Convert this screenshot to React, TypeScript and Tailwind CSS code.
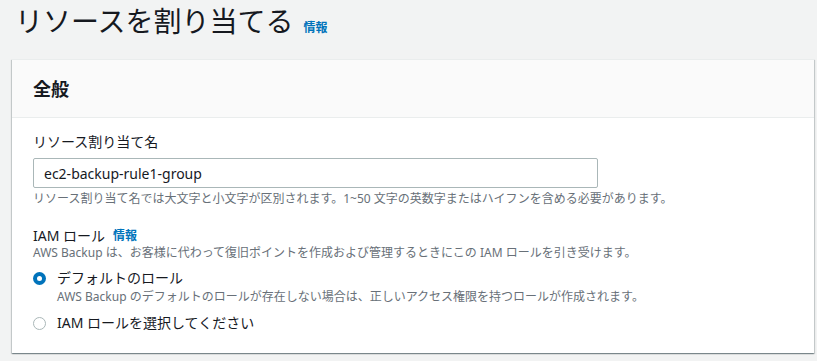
import React from 'react';

const font = { fontFamily: '"Noto Sans", "Noto Sans CJK JP", sans-serif' };

function Radio({ checked }: { checked?: boolean }) {
  return checked ? (
    <span className="flex h-[13px] w-[13px] shrink-0 items-center justify-center rounded-full bg-[#0073bb]">
      <span className="h-[5px] w-[5px] rounded-full bg-white" />
    </span>
  ) : (
    <span className="h-[13px] w-[13px] shrink-0 rounded-full border border-[#aab7b8] bg-white" />
  );
}

export default function App() {
  return (
    <div className="min-h-[361px] w-[817px] bg-[#f2f3f3] text-[#16191f]" style={font}>
      <div className="flex items-baseline gap-[10px] pl-[15px] pt-[4px]">
        <h1 className="text-[28px] font-normal leading-[34px]">リソースを割り当てる</h1>
        <a className="text-[12px] font-bold leading-[16px] text-[#0073bb]">情報</a>
      </div>

      <div className="ml-[12px] mr-[3px] mt-[21px] border-t border-[#eaeded] bg-white shadow-[0_1px_1px_0_rgba(0,28,36,0.3),1px_1px_1px_0_rgba(0,28,36,0.15),-1px_1px_1px_0_rgba(0,28,36,0.15)]">
        <div className="flex h-[58px] items-center border-b border-[#eaeded] bg-[#fafafa] px-[21px]">
          <h2 className="text-[18px] font-bold leading-[22px]">全般</h2>
        </div>

        <div className="px-[21px] pb-[20px] pt-[14px]">
          <label className="block text-[14px] leading-[20px]">リソース割り当て名</label>
          <div className="mt-[6px] flex h-[30px] w-[565px] items-center rounded-[2px] border border-[#aab7b8] px-[10px] text-[14px]">
            ec2-backup-rule1-group
          </div>
          <p className="mt-[3px] text-[12px] leading-[16px] text-[#687078]">
            リソース割り当て名では大文字と小文字が区別されます。1~50 文字の英数字またはハイフンを含める必要があります。
          </p>

          <div className="mt-[20px] flex h-[18px] items-center gap-[8px] text-[14px] leading-[18px]">
            <span>IAM ロール</span>
            <a className="text-[12px] font-bold leading-[18px] text-[#0073bb]">情報</a>
          </div>
          <p className="text-[12px] leading-[16px] text-[#687078]">
            AWS Backup は、お客様に代わって復旧ポイントを作成および管理するときにこの IAM ロールを引き受けます。
          </p>

          <div className="mt-[7px] flex items-center gap-[11px] text-[14px] leading-[20px]">
            <Radio checked />
            <span>デフォルトのロール</span>
          </div>
          <p className="mt-[1px] pl-[24px] text-[12px] leading-[16px] text-[#687078]">
            AWS Backup のデフォルトのロールが存在しない場合は、正しいアクセス権限を持つロールが作成されます。
          </p>

          <div className="mt-[8px] flex items-center gap-[11px] text-[14px] leading-[20px]">
            <Radio />
            <span>IAM ロールを選択してください</span>
          </div>
        </div>
      </div>
    </div>
  );
}
